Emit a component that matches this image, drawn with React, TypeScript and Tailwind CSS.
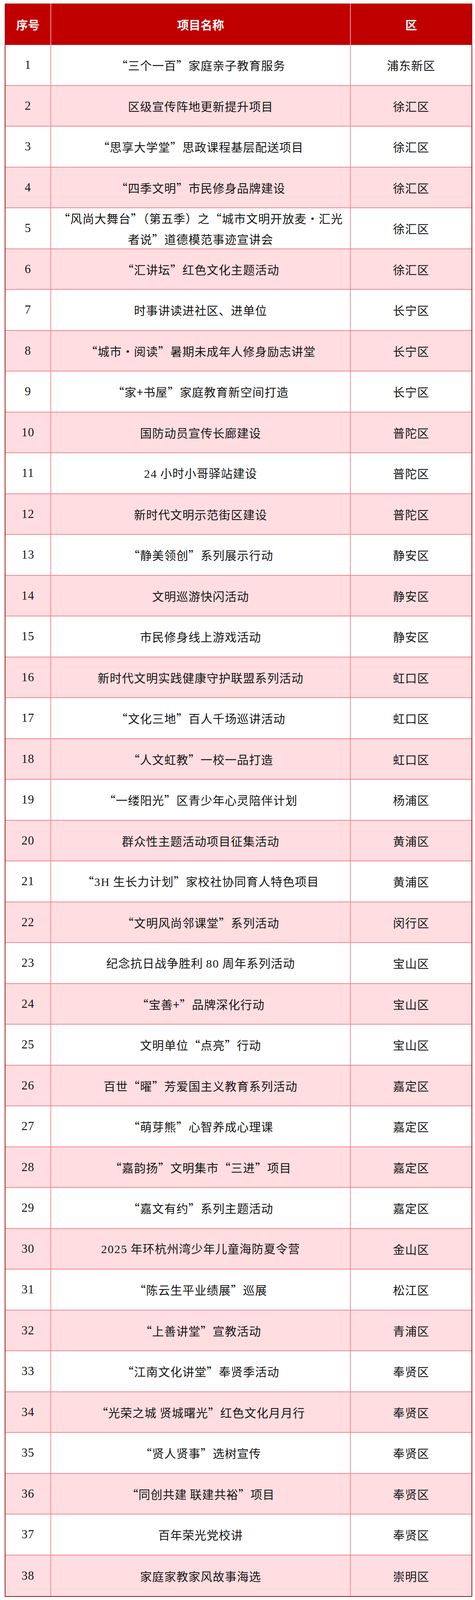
const rows: { no: number; name: string; district: string }[] = [
  { no: 1, name: "“三个一百”家庭亲子教育服务", district: "浦东新区" },
  { no: 2, name: "区级宣传阵地更新提升项目", district: "徐汇区" },
  { no: 3, name: "“思享大学堂”思政课程基层配送项目", district: "徐汇区" },
  { no: 4, name: "“四季文明”市民修身品牌建设", district: "徐汇区" },
  { no: 5, name: "“风尚大舞台”（第五季）之“城市文明开放麦•汇光\n者说”道德模范事迹宣讲会", district: "徐汇区" },
  { no: 6, name: "“汇讲坛”红色文化主题活动", district: "徐汇区" },
  { no: 7, name: "时事讲读进社区、进单位", district: "长宁区" },
  { no: 8, name: "“城市・阅读”暑期未成年人修身励志讲堂", district: "长宁区" },
  { no: 9, name: "“家+书屋”家庭教育新空间打造", district: "长宁区" },
  { no: 10, name: "国防动员宣传长廊建设", district: "普陀区" },
  { no: 11, name: "24 小时小哥驿站建设", district: "普陀区" },
  { no: 12, name: "新时代文明示范街区建设", district: "普陀区" },
  { no: 13, name: "“静美领创”系列展示行动", district: "静安区" },
  { no: 14, name: "文明巡游快闪活动", district: "静安区" },
  { no: 15, name: "市民修身线上游戏活动", district: "静安区" },
  { no: 16, name: "新时代文明实践健康守护联盟系列活动", district: "虹口区" },
  { no: 17, name: "“文化三地”百人千场巡讲活动", district: "虹口区" },
  { no: 18, name: "“人文虹教”一校一品打造", district: "虹口区" },
  { no: 19, name: "“一缕阳光”区青少年心灵陪伴计划", district: "杨浦区" },
  { no: 20, name: "群众性主题活动项目征集活动", district: "黄浦区" },
  { no: 21, name: "“3H 生长力计划”家校社协同育人特色项目", district: "黄浦区" },
  { no: 22, name: "“文明风尚邻课堂”系列活动", district: "闵行区" },
  { no: 23, name: "纪念抗日战争胜利 80 周年系列活动", district: "宝山区" },
  { no: 24, name: "“宝善+”品牌深化行动", district: "宝山区" },
  { no: 25, name: "文明单位“点亮”行动", district: "宝山区" },
  { no: 26, name: "百世“曜”芳爱国主义教育系列活动", district: "嘉定区" },
  { no: 27, name: "“萌芽熊”心智养成心理课", district: "嘉定区" },
  { no: 28, name: "“嘉韵扬”文明集市“三进”项目", district: "嘉定区" },
  { no: 29, name: "“嘉文有约”系列主题活动", district: "嘉定区" },
  { no: 30, name: "2025 年环杭州湾少年儿童海防夏令营", district: "金山区" },
  { no: 31, name: "“陈云生平业绩展”巡展", district: "松江区" },
  { no: 32, name: "“上善讲堂”宣教活动", district: "青浦区" },
  { no: 33, name: "“江南文化讲堂”奉贤季活动", district: "奉贤区" },
  { no: 34, name: "“光荣之城 贤城曙光”红色文化月月行", district: "奉贤区" },
  { no: 35, name: "“贤人贤事”选树宣传", district: "奉贤区" },
  { no: 36, name: "“同创共建 联建共裕”项目", district: "奉贤区" },
  { no: 37, name: "百年荣光党校讲", district: "奉贤区" },
  { no: 38, name: "家庭家教家风故事海选", district: "崇明区" },
];

// latin digits/letters in the source are set in a Times-like face
function Mixed({ text }: { text: string }) {
  const parts = text.split(/([0-9A-Za-z]+)/);
  return (
    <>
      {parts.map((p, i) =>
        /^[0-9A-Za-z]+$/.test(p) ? (
          <span key={i} className="font-['Liberation_Serif',serif] tracking-[2px]">
            {p}
          </span>
        ) : (
          <span key={i}>{p}</span>
        ),
      )}
    </>
  );
}

export default function App() {
  return (
    <div className="w-[1216px] bg-white pb-[4px] pl-[12px] pt-[9px]">
      <div className="w-[1197px] border-b-2 border-l-2 border-r-2 border-[#A3171C]">
        <header className="grid h-[106px] grid-cols-[115px_767px_311px] bg-[#C00000] font-['Noto_Sans_CJK_SC',sans-serif] text-[30px] font-bold text-white">
          <div className="flex items-center justify-center">序号</div>
          <div className="flex items-center justify-center border-l-2 border-[#EE9A9E]">项目名称</div>
          <div className="flex items-center justify-center border-l-2 border-[#EE9A9E]">区</div>
        </header>

        {rows.map((r, i) => {
          const lines = r.name.split("\n");
          const pink = r.no % 2 === 0;
          const last = i === rows.length - 1;
          return (
            <div
              key={r.no}
              className={`grid h-[104.5px] grid-cols-[115px_767px_311px] overflow-hidden text-[30px] leading-[40px] text-[#161616] ${
                pink ? "bg-[#FFDDE0]" : "bg-white"
              } ${last ? "" : "border-b-2 border-[#F2858F]"}`}
            >
              <div className="flex items-center justify-center font-['Liberation_Serif',serif] text-[31px] tracking-[1px]">
                {r.no}
              </div>
              <div className="flex flex-col items-center justify-center gap-[13px] border-l-2 border-[#EE8F97] px-[10px] text-center font-['Noto_Sans_CJK_SC',sans-serif] tracking-[1px]">
                {lines.map((l, j) => (
                  <div key={j} className="whitespace-nowrap">
                    <Mixed text={l} />
                  </div>
                ))}
              </div>
              <div className="flex items-center justify-center border-l-2 border-[#EE8F97] font-['Noto_Sans_CJK_SC',sans-serif] tracking-[1px]">
                {r.district}
              </div>
            </div>
          );
        })}
      </div>
    </div>
  );
}
